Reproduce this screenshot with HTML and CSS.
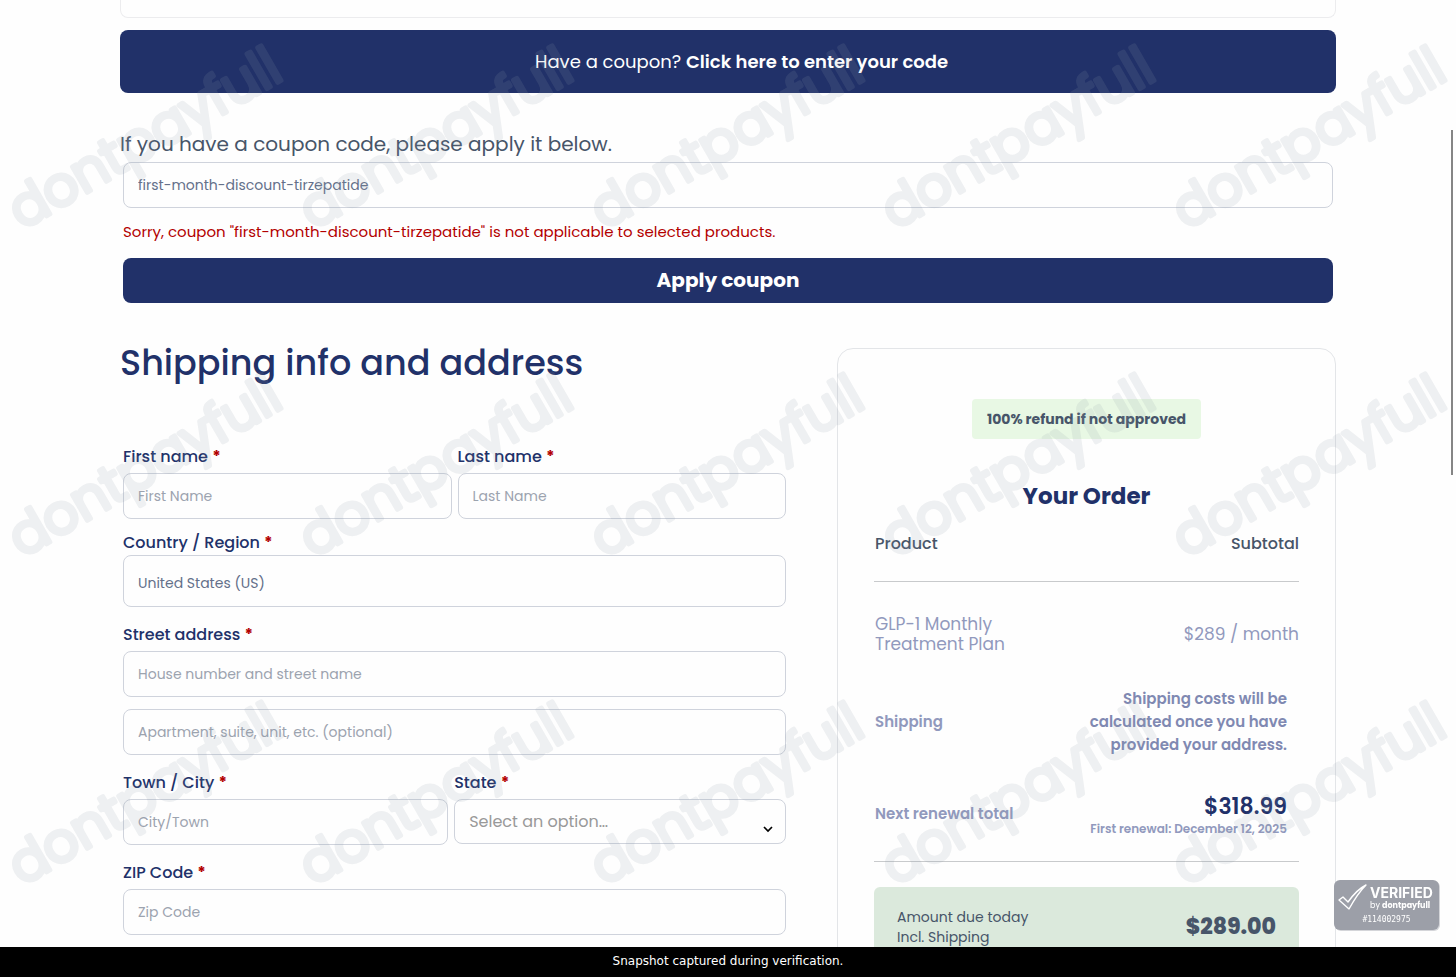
FILE: index.html
```html
<!DOCTYPE html>
<html lang="en">

<head>
    <meta charset="UTF-8">
    <meta name="viewport" content="width=device-width, initial-scale=1.0">
    <title>Checkout</title>
    <link rel="stylesheet" href="styles.css">
</head>

<body>
    <main class="page">
        <div class="previous-box"></div>
        <div class="coupon-banner">
            <p>Have a coupon? <a href="#coupon">Click here to enter your code</a></p>
        </div>

        <form class="coupon" id="coupon">
            <label class="coupon-label" for="coupon-code">If you have a coupon code, please apply it below.</label>
            <div class="coupon-fields">
                <input class="input coupon-input" id="coupon-code" type="text" value="first-month-discount-tirzepatide">
                <p class="coupon-error">Sorry, coupon "first-month-discount-tirzepatide" is not applicable to selected products.</p>
                <button class="coupon-button" type="button">Apply coupon</button>
            </div>
        </form>

        <div class="checkout">
            <form class="shipping">
                <h1>Shipping info and address</h1>
                <div class="fields">
                    <div class="row row-name">
                        <div class="field">
                            <label for="first-name">First name <span class="required">*</span></label>
                            <input class="input" id="first-name" type="text" placeholder="First Name">
                        </div>
                        <div class="field">
                            <label for="last-name">Last name <span class="required">*</span></label>
                            <input class="input" id="last-name" type="text" placeholder="Last Name">
                        </div>
                    </div>
                    <div class="field field-country">
                        <label for="country">Country / Region <span class="required">*</span></label>
                        <input class="input" id="country" type="text" value="United States (US)" readonly>
                    </div>
                    <div class="field">
                        <label for="street">Street address <span class="required">*</span></label>
                        <input class="input" id="street" type="text" placeholder="House number and street name">
                        <input class="input input-second" type="text" aria-label="Apartment" placeholder="Apartment, suite, unit, etc. (optional)">
                    </div>
                    <div class="row row-city">
                        <div class="field">
                            <label for="city">Town / City <span class="required">*</span></label>
                            <input class="input" id="city" type="text" placeholder="City/Town">
                        </div>
                        <div class="field">
                            <label for="state">State <span class="required">*</span></label>
                            <div class="select-box">
                                <select class="input" id="state">
                                    <option>Select an option…</option>
                                </select>
                                <svg class="chevron" width="10" height="7" viewBox="0 0 10 7">
                                    <path d="M1 1l4 4 4-4" fill="none" stroke="#000" stroke-width="1.7" />
                                </svg>
                            </div>
                        </div>
                    </div>
                    <div class="field">
                        <label for="zip">ZIP Code <span class="required">*</span></label>
                        <input class="input" id="zip" type="text" placeholder="Zip Code">
                    </div>
                </div>
            </form>

            <section class="order">
                <p class="refund">100% refund if not approved</p>
                <h2>Your Order</h2>
                <table>
                    <thead>
                        <tr>
                            <th>Product</th>
                            <th class="right">Subtotal</th>
                        </tr>
                    </thead>
                    <tbody>
                        <tr class="item">
                            <td>GLP-1 Monthly<br>Treatment Plan</td>
                            <td class="right">$289 / month</td>
                        </tr>
                        <tr class="shipping-row">
                            <th>Shipping</th>
                            <td class="right inset">Shipping costs will be<br>calculated once you have<br>provided your address.</td>
                        </tr>
                        <tr class="renewal">
                            <th>Next renewal total</th>
                            <td class="right inset"><strong>$318.99</strong><small>First renewal: December 12, 2025</small></td>
                        </tr>
                    </tbody>
                </table>
                <div class="total">
                    <p>Amount due today<br>Incl. Shipping</p>
                    <strong>$289.00</strong>
                </div>
            </section>
        </div>
    </main>

    <footer class="caption">Snapshot captured during verification.</footer>

    <svg class="watermark" width="100%" height="100%" aria-hidden="true">
        <defs>
            <pattern id="mark" width="291" height="328" patternUnits="userSpaceOnUse">
                <text class="mark-text" transform="translate(22 230) rotate(-30)">dontpayfull</text>
            </pattern>
        </defs>
        <rect width="100%" height="100%" fill="url(#mark)" />
    </svg>

    <div class="scroll-thumb"></div>

    <div class="verified">
        <svg class="tick" width="30" height="28" viewBox="0 0 30 28">
            <path d="M1 16l4-3 5 5C15 11 20 5 28 1 21 8 16 16 11 25z" fill="none" stroke="#fff" stroke-width="1.4" stroke-linejoin="round" />
        </svg>
        <div class="verified-name">
            <b>VERIFIED</b>
            <span>by <strong>dontpayfull</strong></span>
        </div>
        <p>#114002975</p>
    </div>
</body>

</html>
```
FILE: styles.css
```css
* {
    box-sizing: border-box;
    margin: 0;
    padding: 0;
}

body {
    display: flex;
    flex-direction: column;
    height: 100vh;
    overflow: hidden;
    background-color: #fefefe;
    color: #475569;
    font-family: Poppins, Inter, sans-serif;
}

.page {
    flex: 1;
    min-height: 0;
    padding: 0 120px;
    overflow: hidden;
}

.previous-box {
    height: 18px;
    border: 1px solid #ececee;
    border-top: 0;
    border-radius: 0 0 8px 8px;
}

.coupon-banner {
    margin-top: 12px;
    padding: 18px 0 18px 27px;
    border-radius: 8px;
    background-color: #213169;
    color: #fff;
    font-size: 18px;
    line-height: 27px;
    text-align: center;
}

.coupon-banner a {
    color: #fff;
    font-weight: 600;
    text-decoration: none;
}

.coupon {
    margin-top: 36px;
}

.coupon-label {
    display: block;
    font-size: 20px;
    line-height: 30px;
}

.coupon-fields {
    padding: 3px;
}

.input {
    display: block;
    width: 100%;
    height: 46px;
    padding: 0 14px;
    border: 1px solid #cfd3dc;
    border-radius: 8px;
    background-color: transparent;
    color: #64708a;
    font-family: inherit;
    font-size: 14px;
    appearance: none;
}

.input::placeholder {
    color: #9ca3af;
    opacity: 1;
}

.coupon-error {
    margin: 12px 0 14px;
    color: #b30000;
    font-size: 15px;
    line-height: 24px;
}

.coupon-button {
    display: block;
    width: 100%;
    height: 45px;
    padding-bottom: 2px;
    border: 0;
    border-radius: 8px;
    background-color: #213169;
    color: #fff;
    font-family: inherit;
    font-size: 20px;
    font-weight: 700;
}

.checkout {
    display: grid;
    grid-template-columns: 669fr 499fr;
    gap: 48px;
    align-items: start;
    margin-top: 42px;
}

h1 {
    margin-top: -12px;
    color: #213169;
    font-size: 35px;
    font-weight: 500;
    line-height: 54px;
}

.fields {
    display: grid;
    gap: 16px;
    margin-top: 55px;
    padding: 0 3px;
}

.row {
    display: grid;
    gap: 6px;
}

.row-name {
    grid-template-columns: 1fr 1fr;
    margin-bottom: -4px;
}

.row-city {
    grid-template-columns: 49fr 50fr;
}

.field label {
    display: block;
    margin-bottom: 4px;
    color: #213169;
    font-size: 16px;
    font-weight: 500;
    line-height: 24px;
}

.required {
    color: #b30000;
    font-weight: 700;
}

.field-country label {
    margin-bottom: 0;
}

.field-country .input {
    height: 52px;
    padding-top: 4px;
}

.input-second {
    margin-top: 12px;
}

.select-box {
    position: relative;
}

.select-box .input {
    height: 45px;
    margin-bottom: 1px;
    color: #999;
    font-size: 16px;
}

.chevron {
    position: absolute;
    right: 13px;
    bottom: 11px;
}

.order {
    padding: 50px 36px;
    border: 1px solid #e3e5e8;
    border-radius: 16px;
}

.refund {
    width: fit-content;
    margin: 0 auto;
    padding: 8px 15px;
    border-radius: 4px;
    background-color: #e8f8e4;
    font-size: 14px;
    font-weight: 700;
    line-height: 24px;
}

h2 {
    margin-top: 39px;
    color: #213169;
    font-size: 23px;
    font-weight: 700;
    line-height: 36px;
    text-align: center;
}

table {
    width: 100%;
    margin-top: 18px;
    border-collapse: collapse;
}

th {
    padding-left: 1px;
    text-align: left;
}

thead th {
    padding-bottom: 25px;
    border-bottom: 1px solid #c8cacc;
    font-size: 16px;
    font-weight: 500;
    line-height: 24px;
}

th.right,
td.right {
    text-align: right;
}

tbody {
    color: #9199bd;
}

.item td {
    padding: 32px 0 24px 1px;
    font-size: 17px;
    line-height: 20px;
}

.shipping-row,
.renewal {
    font-size: 15px;
    font-weight: 600;
    line-height: 23px;
}

.shipping-row th,
.renewal th {
    font-weight: 600;
}

.shipping-row td {
    padding: 9px 0 8px;
    color: #8089b2;
}

.shipping-row td.inset,
.renewal td.inset {
    padding-right: 12px;
}

.renewal th,
.renewal td {
    padding-top: 30px;
    padding-bottom: 23px;
    border-bottom: 1px solid #c8cacc;
}

.renewal th {
    padding-top: 24px;
}

.renewal strong {
    display: block;
    color: #213169;
    font-size: 22px;
    font-weight: 600;
    line-height: 26px;
}

.renewal small {
    display: block;
    font-size: 12px;
    line-height: 18px;
}

.total {
    display: flex;
    justify-content: space-between;
    align-items: center;
    margin-top: 25px;
    padding: 20px 23px;
    border-radius: 6px;
    background-color: #dbe9dc;
    font-size: 14px;
    line-height: 20px;
}

.total strong {
    font-size: 22px;
    font-weight: 800;
}

.caption {
    height: 30px;
    background-color: #000;
    color: #fff;
    font-family: "DejaVu Sans", sans-serif;
    font-size: 12px;
    line-height: 28px;
    text-align: center;
}

/* overlays */
.watermark {
    position: fixed;
    top: 0;
    left: 0;
    opacity: 0.14;
    pointer-events: none;
}

.mark-text {
    fill: #909ca8;
    stroke: #909ca8;
    stroke-width: 5px;
    stroke-linejoin: round;
    font-family: Poppins, Inter, sans-serif;
    font-size: 54px;
    font-weight: 300;
}

.scroll-thumb {
    position: fixed;
    top: 130px;
    right: 3px;
    width: 2px;
    height: 345px;
    background-color: #858585;
}

.verified {
    position: fixed;
    right: 17px;
    bottom: 47px;
    display: grid;
    grid-template-columns: 30px 1fr;
    gap: 0 2px;
    width: 105px;
    height: 50px;
    padding: 4px;
    border-radius: 6px;
    background-color: #9c9fa8;
    box-shadow: 1px 1px 0 #d4d5d9;
    color: #fff;
}

.verified-name b,
.verified-name span {
    display: block;
    font-family: Inter, sans-serif;
    font-size: 14px;
    line-height: 17px;
}

.verified-name span {
    font-family: Poppins, Inter, sans-serif;
    font-size: 8px;
    line-height: 10px;
}

.verified p {
    grid-column: 1 / 3;
    font-family: "DejaVu Sans Mono", monospace;
    font-size: 8px;
    line-height: 16px;
    text-align: center;
}
```
